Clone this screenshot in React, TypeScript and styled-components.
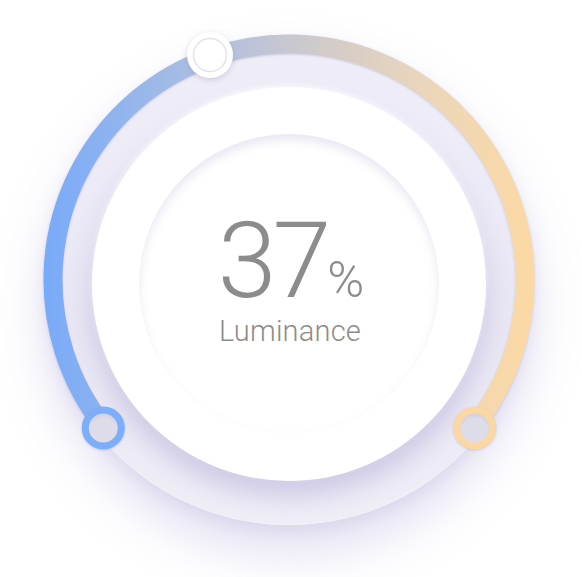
import React from 'react'
import styled, { createGlobalStyle } from 'styled-components'

const GlobalStyle = createGlobalStyle`
    html, body {
        margin: 0;
        padding: 0;
        background: #ffffff;
    }
    body {
        font-family: Roboto, "Open Sans", "Liberation Sans", sans-serif;
    }
`

const Stage = styled.div`
    width: 582px;
    height: 577px;
    box-sizing: border-box;
    padding: 35px 0 0 44px;
    overflow: hidden;
`

const Dial = styled.div`
    position: relative;
    width: 490px;
    height: 490px;
    border-radius: 50%;
    background: linear-gradient(180deg, #efeef8 0%, #e9e7f4 60%, #f0eff7 100%);
    box-shadow: 0 28px 50px rgba(150, 140, 205, 0.28), 0 6px 14px rgba(170, 165, 215, 0.18);
    display: flex;
    align-items: center;
    justify-content: center;
`

const Plate = styled.div`
    width: 394px;
    height: 394px;
    margin-top: 8px;
    border-radius: 50%;
    background: #ffffff;
    box-shadow: 0 16px 26px rgba(130, 120, 190, 0.3), 0 -2px 6px rgba(255, 255, 255, 0.9);
    display: flex;
    align-items: center;
    justify-content: center;
`

const Well = styled.div`
    width: 300px;
    height: 300px;
    border-radius: 50%;
    background: #ffffff;
    box-shadow: inset 0 6px 10px rgba(165, 160, 205, 0.24), inset 0 -2px 6px rgba(255, 255, 255, 0.9);
    display: flex;
    flex-direction: column;
    align-items: center;
    justify-content: center;
    color: #8c8c8c;
`

const Value = styled.div`
    display: flex;
    align-items: baseline;
    margin-top: -1px;
    margin-left: 4px;
`

const Digits = styled.span`
    font-size: 106px;
    font-weight: 300;
    line-height: 0.8;
    letter-spacing: -4px;
`

const Percent = styled.span`
    font-size: 50px;
    font-weight: 300;
    line-height: 0.8;
`

const Label = styled.div`
    font-size: 29px;
    font-weight: 300;
    line-height: 34px;
    margin-top: 10px;
    margin-left: 2px;
    letter-spacing: 0.2px;
`

const ArcLayer = styled.svg`
    position: absolute;
    left: 0;
    top: 0;
    overflow: visible;
    pointer-events: none;
`

const CX = 245
const R = 236
const start = { x: CX - 184.7, y: CX + 146.9 }
const end = { x: CX + 184.7, y: CX + 146.9 }

export default function App() {
    return (
        <>
            <GlobalStyle />
            <Stage>
                <Dial>
                    <Plate>
                        <Well>
                            <Value>
                                <Digits>37</Digits>
                                <Percent>%</Percent>
                            </Value>
                            <Label>Luminance</Label>
                        </Well>
                    </Plate>
                    <ArcLayer width={490} height={490} viewBox="0 0 490 490">
                        <defs>
                            <linearGradient id="arcGrad" gradientUnits="userSpaceOnUse" x1="0" y1="0" x2="490" y2="0">
                                <stop offset="0" stopColor="#78aaf9" />
                                <stop offset="0.3" stopColor="#a9bde3" />
                                <stop offset="0.55" stopColor="#cfcacb" />
                                <stop offset="0.78" stopColor="#ebd6bb" />
                                <stop offset="1" stopColor="#fcd9a3" />
                            </linearGradient>
                            <radialGradient id="holeGrad" cx="0.5" cy="0.6" r="0.6">
                                <stop offset="0.6" stopColor="#dedce9" />
                                <stop offset="1" stopColor="#c9c6d8" />
                            </radialGradient>
                            <filter id="soft" x="-20%" y="-20%" width="140%" height="140%">
                                <feDropShadow dx="0" dy="1" stdDeviation="1.2" floodColor="#8a86b0" floodOpacity="0.35" />
                            </filter>
                            <filter id="knobShadow" x="-50%" y="-50%" width="200%" height="200%">
                                <feDropShadow dx="0" dy="2" stdDeviation="3" floodColor="#8f8ab8" floodOpacity="0.35" />
                            </filter>
                        </defs>
                        <path
                            d={`M ${start.x} ${start.y} A ${R} ${R} 0 1 1 ${end.x} ${end.y}`}
                            fill="none"
                            stroke="url(#arcGrad)"
                            strokeWidth={19}
                            strokeLinecap="round"
                            filter="url(#soft)"
                        />
                        <g filter="url(#soft)">
                            <circle cx={start.x - 1} cy={start.y + 1} r={18} fill="url(#holeGrad)" stroke="#7caefa" strokeWidth={7} />
                            <circle cx={end.x + 1} cy={end.y + 1} r={18} fill="url(#holeGrad)" stroke="#fbd8a3" strokeWidth={7} />
                        </g>
                        <g filter="url(#knobShadow)">
                            <circle cx={166} cy={20} r={23} fill="#ffffff" />
                        </g>
                        <circle cx={166} cy={20} r={16.5} fill="#ffffff" stroke="#e4e3ec" strokeWidth={1.5} />
                    </ArcLayer>
                </Dial>
            </Stage>
        </>
    )
}
